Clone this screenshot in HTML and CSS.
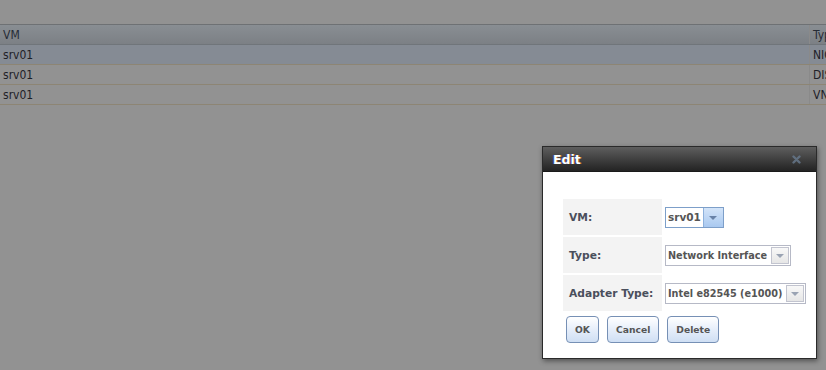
FILE: index.html
```html
<!DOCTYPE html>
<html lang="en">
<head>
    <meta charset="UTF-8">
    <title>Devices</title>
    <link rel="stylesheet" href="styles.css">
</head>
<body>
    <div class="grid">
        <div class="grid-row grid-head">
            <div class="cell">VM</div>
            <div class="cell">Type</div>
        </div>
        <div class="grid-row selected">
            <div class="cell">srv01</div>
            <div class="cell">NIC</div>
        </div>
        <div class="grid-row">
            <div class="cell">srv01</div>
            <div class="cell">DISK</div>
        </div>
        <div class="grid-row">
            <div class="cell">srv01</div>
            <div class="cell">VNC</div>
        </div>
    </div>

    <div class="dialog">
        <div class="dialog-title">
            <span>Edit</span>
            <svg class="close" width="9" height="9" viewBox="0 0 9 9">
                <path d="M1.5 1.5 L7.5 7.5 M7.5 1.5 L1.5 7.5" stroke="#66778a" stroke-width="2.4" stroke-linecap="round"/>
            </svg>
        </div>
        <div class="dialog-body">
            <table class="form">
                <tr>
                    <th>VM:</th>
                    <td>
                        <div class="select focused">
                            <span class="select-text">srv01</span>
                            <span class="select-arrow"><i></i></span>
                        </div>
                    </td>
                </tr>
                <tr>
                    <th>Type:</th>
                    <td>
                        <div class="select">
                            <span class="select-text">Network Interface</span>
                            <span class="select-arrow"><i></i></span>
                        </div>
                    </td>
                </tr>
                <tr>
                    <th>Adapter Type:</th>
                    <td>
                        <div class="select">
                            <span class="select-text">Intel e82545 (e1000)</span>
                            <span class="select-arrow"><i></i></span>
                        </div>
                    </td>
                </tr>
            </table>
            <div class="buttons">
                <button class="btn btn-ok">OK</button>
                <button class="btn">Cancel</button>
                <button class="btn">Delete</button>
            </div>
        </div>
    </div>
</body>
</html>
```

FILE: styles.css
```css
body {
    margin: 0;
    padding: 0;
    background: #929292;
    font-family: "DejaVu Sans", Verdana, sans-serif;
    overflow: hidden;
}
.grid {
    margin-top: 24px;
}
.grid-row {
    display: grid;
    grid-template-columns: 809px 1fr;
    height: 19px;
    border-bottom: 1px solid #8d8574;
    color: #1e2128;
    font-family: "DejaVu Sans Condensed", "DejaVu Sans", sans-serif;
    font-size: 12px;
}
.grid-row .cell {
    padding: 3px 0 0 3px;
    white-space: nowrap;
    overflow: hidden;
}
.grid-row .cell + .cell {
    border-left: 1px solid #8a8a8a;
}
.grid-head {
    height: 19px;
    border-top: 1px solid #6e7174;
    border-bottom: 1px solid #70757a;
    background: linear-gradient(#898e93, #7c8085);
    color: #262c36;
}
.selected {
    background: #858b94;
}

.dialog {
    position: absolute;
    left: 542px;
    top: 146px;
    width: 273px;
    height: 211px;
    border: 1px solid #2a2a2a;
    background: #fff;
    box-shadow: 1px 2px 5px rgba(0, 0, 0, 0.45);
}
.dialog-title {
    height: 24px;
    display: flex;
    justify-content: space-between;
    align-items: center;
    padding: 0 15px 0 10px;
    background: linear-gradient(#5e5e5e, #3a3a3a 60%, #232323);
    border-bottom: 1px solid #1a1a1a;
}
.dialog-title span {
    color: #fff;
    font-weight: bold;
    font-size: 12.5px;
    text-shadow: -1px 0 0 #4050a0, 1px 0 0 #a06020;
}
.close {
    opacity: 0.85;
}
.dialog-body {
    padding: 25px 0 0 18px;
}
.form {
    border-collapse: separate;
    border-spacing: 2px;
}
.form th {
    width: 93px;
    height: 36px;
    padding: 0 0 0 6px;
    background: #f3f3f3;
    text-align: left;
    font-size: 10.7px;
    color: #4a4f5c;
    white-space: nowrap;
}
.form td {
    padding: 0 0 0 1px;
    vertical-align: middle;
}
.select {
    display: inline-flex;
    align-items: stretch;
    height: 19px;
    border: 1px solid #b6b9c6;
    background: #fff;
}
.select-text {
    padding: 0 4px 0 2px;
    line-height: 19px;
    font-size: 9.7px;
    font-weight: bold;
    color: #555;
    white-space: nowrap;
}
.select-arrow {
    width: 18px;
    margin: 1px 1px 1px 0;
    border: 1px solid #c2c4cf;
    background: linear-gradient(#f8f8f8, #e6e6e6);
    display: flex;
    align-items: center;
    justify-content: center;
    box-sizing: border-box;
}
.select-arrow i {
    width: 0;
    height: 0;
    border-left: 4px solid transparent;
    border-right: 4px solid transparent;
    border-top: 4px solid #9aa3b3;
}
.select.focused {
    border-color: #7d9fc9;
}
.select.focused .select-text {
    font-size: 10.5px;
    padding-right: 2px;
}
.select.focused .select-arrow {
    width: 20px;
    margin: 0;
    border: 1px solid #8eb1dc;
    border-right: 0;
    border-top: 0;
    border-bottom: 0;
    background: linear-gradient(#d3e4f9, #a9c9f0);
}
.select.focused .select-arrow i {
    border-top-color: #6882a8;
}
.buttons {
    display: flex;
    gap: 8px;
    margin: 3px 0 0 5px;
}
.btn {
    height: 27px;
    padding: 0 8px;
    border: 1px solid #7690b5;
    border-radius: 4px;
    background: linear-gradient(#ffffff, #e6eefa 50%, #cfdff4);
    font-family: "DejaVu Sans", Verdana, sans-serif;
    font-size: 9.2px;
    font-weight: bold;
    color: #555;
    cursor: pointer;
}
.btn-ok {
    width: 33px;
    padding: 0;
}
```
